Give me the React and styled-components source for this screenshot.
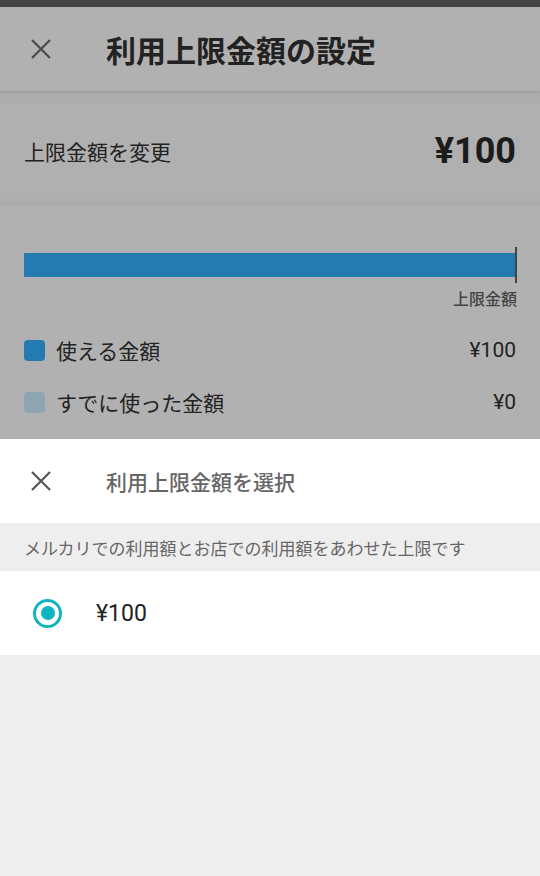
import React from 'react';
import styled, { createGlobalStyle } from 'styled-components';

const GlobalStyle = createGlobalStyle`
  html, body {
    margin: 0;
    padding: 0;
    background: #eeeeee;
    font-family: Roboto, "Noto Sans CJK JP", "Noto Sans", sans-serif;
  }
`;

const Screen = styled.div`
  width: 540px;
  min-height: 876px;
  display: flex;
  flex-direction: column;
  background: #eeeeee;
`;

const StatusBar = styled.div`
  height: 7px;
  background: #444444;
`;

// dimmed page behind the sheet
const Dimmed = styled.div`
  background: #acacac;
  display: flex;
  flex-direction: column;
`;

const Header = styled.div`
  height: 84px;
  display: flex;
  align-items: center;
  background: #b1b1b1;
  box-shadow: 0 1px 2px rgba(0, 0, 0, 0.12);
  position: relative;
  z-index: 1;
`;

const CloseButton = styled.div`
  width: 106px;
  height: 100%;
  display: flex;
  align-items: center;
  padding-left: 31px;
  box-sizing: border-box;
  svg { display: block; }
`;

const HeaderTitle = styled.h1`
  margin: 0;
  font-size: 30px;
  font-weight: 700;
  color: #222222;
`;

const LimitCard = styled.div`
  margin-top: 12px;
  height: 96px;
  background: #b0b0b0;
  display: flex;
  align-items: center;
  justify-content: space-between;
  padding: 0 24px;
`;

const LimitLabel = styled.span`
  font-size: 21px;
  color: #222222;
`;

const LimitValue = styled.span`
  font-size: 36px;
  font-weight: 700;
  color: #1c1c1c;
`;

const UsageSection = styled.div`
  margin-top: 6px;
  height: 234px;
  background: #b1b1b1;
  padding: 42px 24px 0 24px;
  box-sizing: border-box;
`;

const BarWrap = styled.div`
  position: relative;
  height: 36px;
  display: flex;
  align-items: center;
`;

const Bar = styled.div`
  height: 24px;
  width: 100%;
  background: #237bb1;
  border-radius: 1px;
`;

const LimitTick = styled.div`
  position: absolute;
  right: -1px;
  top: 0;
  width: 2px;
  height: 36px;
  background: #444444;
`;

const TickLabel = styled.div`
  text-align: right;
  font-size: 16px;
  font-weight: 500;
  color: #444444;
  margin-top: 6px;
  line-height: 22px;
  margin-right: -1px;
`;

const Legend = styled.div`
  margin-top: 25px;
  display: flex;
  flex-direction: column;
  gap: 24px;
`;

const LegendRow = styled.div`
  display: flex;
  align-items: center;
  height: 28px;
`;

const Swatch = styled.span`
  width: 21px;
  height: 21px;
  border-radius: 4px;
  background: ${(p) => p.color};
  margin-right: 11px;
`;

const LegendText = styled.span`
  flex: 1;
  font-size: 21px;
  color: #222222;
`;

const LegendValue = styled.span`
  font-size: 21px;
  color: #222222;
`;

// bottom sheet
const Sheet = styled.div`
  display: flex;
  flex-direction: column;
`;

const SheetHeader = styled.div`
  height: 84px;
  background: #ffffff;
  display: flex;
  align-items: center;
`;

const SheetTitle = styled.span`
  font-size: 21px;
  font-weight: 500;
  color: #666666;
`;

const Note = styled.div`
  height: 48px;
  display: flex;
  align-items: center;
  padding: 0 24px;
  background: #eeeeee;
  font-size: 17px;
  color: #666666;
`;

const Option = styled.div`
  height: 84px;
  background: #ffffff;
  display: flex;
  align-items: center;
  padding-left: 33px;
`;

const Radio = styled.span`
  width: 29px;
  height: 29px;
  border-radius: 50%;
  border: 3px solid #0fb5bf;
  box-sizing: border-box;
  display: flex;
  align-items: center;
  justify-content: center;
  margin-right: 34px;

  &::after {
    content: '';
    width: 14px;
    height: 14px;
    border-radius: 50%;
    background: #0fb5bf;
  }
`;

const OptionText = styled.span`
  font-size: 23px;
  color: #222222;
`;

const CloseIcon = ({ color }) => (
  <svg width="20" height="20" viewBox="0 0 20 20">
    <path d="M1 1 L19 19 M19 1 L1 19" stroke={color} strokeWidth="2.2" fill="none" />
  </svg>
);

const legend = [
  { label: '使える金額', value: '¥100', color: '#237bb1' },
  { label: 'すでに使った金額', value: '¥0', color: '#8fa5b4' },
];

const App = () => (
  <Screen>
    <GlobalStyle />
    <StatusBar />
    <Dimmed>
      <Header>
        <CloseButton>
          <CloseIcon color="#4a4a4a" />
        </CloseButton>
        <HeaderTitle>利用上限金額の設定</HeaderTitle>
      </Header>
      <LimitCard>
        <LimitLabel>上限金額を変更</LimitLabel>
        <LimitValue>¥100</LimitValue>
      </LimitCard>
      <UsageSection>
        <BarWrap>
          <Bar />
          <LimitTick />
        </BarWrap>
        <TickLabel>上限金額</TickLabel>
        <Legend>
          {legend.map((item) => (
            <LegendRow key={item.label}>
              <Swatch color={item.color} />
              <LegendText>{item.label}</LegendText>
              <LegendValue>{item.value}</LegendValue>
            </LegendRow>
          ))}
        </Legend>
      </UsageSection>
    </Dimmed>
    <Sheet>
      <SheetHeader>
        <CloseButton>
          <CloseIcon color="#555555" />
        </CloseButton>
        <SheetTitle>利用上限金額を選択</SheetTitle>
      </SheetHeader>
      <Note>メルカリでの利用額とお店での利用額をあわせた上限です</Note>
      <Option>
        <Radio />
        <OptionText>¥100</OptionText>
      </Option>
    </Sheet>
  </Screen>
);

export default App;
